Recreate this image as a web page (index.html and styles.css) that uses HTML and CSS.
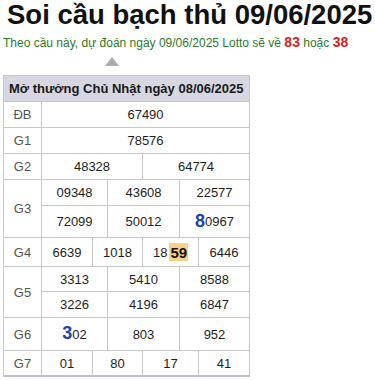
FILE: index.html
```html
<!DOCTYPE html>
<html lang="vi">
<head>
<meta charset="utf-8">
<title>Soi cầu bạch thủ 09/06/2025</title>
<link rel="stylesheet" href="styles.css">
</head>
<body>
<h1 class="title">Soi cầu bạch thủ 09/06/2025</h1>
<p class="sub">Theo cầu này, dự đoán ngày 09/06/2025 Lotto sẽ về <b class="hot">83</b> hoặc <b class="hot">38</b></p>
<div class="arrow"></div>
<div class="kq">
  <div class="kq-head">Mở thưởng Chủ Nhật ngày 08/06/2025</div>
  <div class="prize">
    <div class="lbl">ĐB</div>
    <div class="vals"><div class="line cols1 h25"><div class="cell">67490</div></div></div>
  </div>
  <div class="prize">
    <div class="lbl">G1</div>
    <div class="vals"><div class="line cols1 h25"><div class="cell">78576</div></div></div>
  </div>
  <div class="prize">
    <div class="lbl">G2</div>
    <div class="vals"><div class="line cols2 h25"><div class="cell">48328</div><div class="cell">64774</div></div></div>
  </div>
  <div class="prize">
    <div class="lbl">G3</div>
    <div class="vals">
      <div class="line cols3 h25"><div class="cell">09348</div><div class="cell">43608</div><div class="cell">22577</div></div>
      <div class="line cols3 h31"><div class="cell">72099</div><div class="cell">50012</div><div class="cell"><span class="big">8</span>0967</div></div>
    </div>
  </div>
  <div class="prize">
    <div class="lbl">G4</div>
    <div class="vals"><div class="line cols4 h28"><div class="cell">6639</div><div class="cell">1018</div><div class="cell">18<span class="mark">59</span></div><div class="cell">6446</div></div></div>
  </div>
  <div class="prize">
    <div class="lbl">G5</div>
    <div class="vals">
      <div class="line cols3 h24"><div class="cell">3313</div><div class="cell">5410</div><div class="cell">8588</div></div>
      <div class="line cols3 h25"><div class="cell">3226</div><div class="cell">4196</div><div class="cell">6847</div></div>
    </div>
  </div>
  <div class="prize">
    <div class="lbl">G6</div>
    <div class="vals"><div class="line cols3 h32"><div class="cell"><span class="big">3</span>02</div><div class="cell">803</div><div class="cell">952</div></div></div>
  </div>
  <div class="prize">
    <div class="lbl">G7</div>
    <div class="vals"><div class="line cols4 h24"><div class="cell">01</div><div class="cell">80</div><div class="cell">17</div><div class="cell">41</div></div></div>
  </div>
</div>
</body>
</html>
```
FILE: styles.css
```css
html, body {
  margin: 0;
  padding: 0;
  background: #fff;
}
body {
  font-family: "Liberation Sans", Arial, sans-serif;
  color: #222;
}
.title {
  margin: 0;
  padding-left: 7px;
  font-size: 27.5px;
  line-height: 30px;
  font-weight: bold;
  color: #111;
  white-space: nowrap;
}
.sub {
  margin: 3px 0 0;
  padding-left: 3px;
  height: 18px;
  font-size: 12px;
  line-height: 18px;
  color: #2b7a2b;
  white-space: nowrap;
}
.hot {
  font-size: 14px;
  color: #d61f1f;
}
.arrow {
  width: 0;
  height: 0;
  margin: 6px 0 0 105px;
  border-left: 7px solid transparent;
  border-right: 7px solid transparent;
  border-bottom: 9px solid #ababab;
}
.kq {
  box-sizing: border-box;
  width: 247px;
  margin: 9px 0 0 3px;
  border: 1px solid #c6c6cc;
  border-bottom: 2px solid #c0c0cc;
  font-size: 13px;
}
.kq-head {
  height: 25px;
  line-height: 25px;
  padding-left: 5px;
  background: #d6d7e0;
  font-weight: bold;
  color: #1a1a1a;
}
.prize {
  display: grid;
  grid-template-columns: 38px 1fr;
  border-top: 1px solid #c8c8c8;
}
.lbl {
  box-sizing: border-box;
  border-right: 1px solid #c8c8c8;
  display: flex;
  align-items: center;
  justify-content: center;
  color: #555;
}
.line {
  display: grid;
}
.line + .line {
  border-top: 1px solid #c8c8c8;
}
.cols1 { grid-template-columns: 1fr; }
.cols2 { grid-template-columns: 100px 107px; }
.cols3 { grid-template-columns: 65px 72px 70px; }
.cols4 { grid-template-columns: 50px 50px 56px 51px; }
.h24 { height: 24px; }
.h25 { height: 25px; }
.h28 { height: 28px; }
.h31 { height: 31px; }
.h32 { height: 32px; }
.cell {
  box-sizing: border-box;
  display: flex;
  align-items: center;
  justify-content: center;
  color: #1e1e1e;
  white-space: nowrap;
}
.cell + .cell {
  border-left: 1px solid #c8c8c8;
}
.big {
  font-size: 18px;
  font-weight: bold;
  color: #1f3fae;
  line-height: 18px;
  position: relative;
  top: -1px;
}
.mark {
  margin-left: 2px;
  padding: 1px 1px 0;
  background: #f8d185;
  font-size: 15px;
  font-weight: bold;
  color: #111;
  line-height: 17px;
}
```
